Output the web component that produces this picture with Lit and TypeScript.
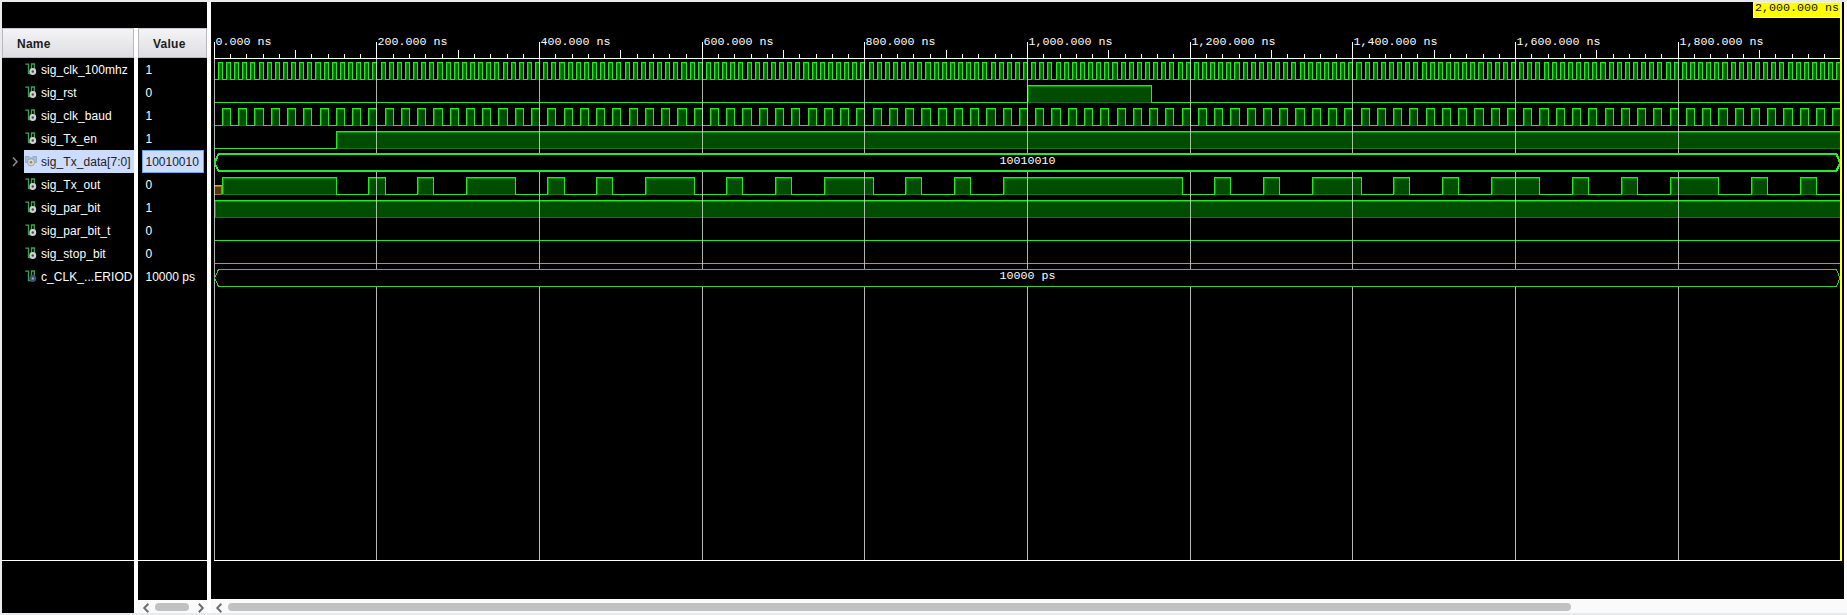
import { LitElement, html, svg, css } from "lit";
import { customElement } from "lit/decorators.js";

type Kind = "bit" | "bus";
interface Signal {
  name: string;
  value: string;
  kind: Kind;
  icon: "sig" | "bus" | "const";
  selected?: boolean;
  start?: number;
  edges?: number[];
  unknownUntil?: number;
}

const END = 2000;
const ORIGIN = 3;
const SCALE = 0.8133;
const px = (t: number) => Math.floor(ORIGIN + t * SCALE + 0.3);

const clock = (half: number): number[] => {
  const out: number[] = [];
  for (let t = half; t < END; t += half) out.push(t);
  return out;
};

const TX_OUT = [
  150, 190, 210, 250, 270, 310, 370, 410, 430, 470, 490, 530, 590, 630, 650, 690, 710, 750, 810, 850, 870, 910, 930,
  970, 1190, 1230, 1250, 1290, 1310, 1350, 1410, 1450, 1470, 1510, 1530, 1570, 1630, 1670, 1690, 1730, 1750, 1790,
  1850, 1890, 1910, 1950, 1970,
];

const SIGNALS: Signal[] = [
  { name: "sig_clk_100mhz", value: "1", kind: "bit", icon: "sig", start: 0, edges: clock(5) },
  { name: "sig_rst", value: "0", kind: "bit", icon: "sig", start: 0, edges: [1000, 1152] },
  { name: "sig_clk_baud", value: "1", kind: "bit", icon: "sig", start: 0, edges: clock(10) },
  { name: "sig_Tx_en", value: "1", kind: "bit", icon: "sig", start: 0, edges: [150] },
  { name: "sig_Tx_data[7:0]", value: "10010010", kind: "bus", icon: "bus", selected: true },
  { name: "sig_Tx_out", value: "0", kind: "bit", icon: "sig", start: 1, edges: TX_OUT, unknownUntil: 10 },
  { name: "sig_par_bit", value: "1", kind: "bit", icon: "sig", start: 1, edges: [] },
  { name: "sig_par_bit_t", value: "0", kind: "bit", icon: "sig", start: 0, edges: [] },
  { name: "sig_stop_bit", value: "0", kind: "bit", icon: "sig", start: 0, edges: [] },
  { name: "c_CLK_...ERIOD", value: "10000 ps", kind: "bus", icon: "const" },
];

const GRID = [0, 200, 400, 600, 800, 1000, 1200, 1400, 1600, 1800];

@customElement("signal-icon")
export class SignalIcon extends LitElement {
  static properties = { kind: {} };
  declare kind: string;
  static styles = css`
    :host { display: block; width: 12px; height: 13px; }
    svg { display: block; overflow: visible; }
  `;
  render() {
    if (this.kind === "bus")
      return html`<svg width="12" height="13" viewBox="0 0 12 13">
        <path d="M0.5 1.5H4L6 3.5L8 1.5H11.5V7.5H0.5Z" fill="#9fc0d8" stroke="#8aa4b4" stroke-width=".8" />
        <circle cx="6" cy="7.3" r="3.6" fill="#d6d8d8" stroke="#94989a" stroke-width=".8" />
        <circle cx="6" cy="7.3" r="1.3" fill="#9a8660" />
      </svg>`;
    const constant = this.kind === "const";
    return html`<svg width="12" height="13" viewBox="0 0 12 13">
      <path d="M0.3 1.2H3.5V10.5H6.5V1H9.3V7" fill="none" stroke="#3ca356" stroke-width="1.3" />
      <circle cx="7.8" cy="8.5" r="3.4" fill=${constant ? "#39506e" : "#d0d0d0"} />
      <circle cx="7.8" cy="8.5" r="1.2" fill=${constant ? "#8ba0bd" : "#4a4a4a"} />
    </svg>`;
  }
}

@customElement("wave-ruler")
export class WaveRuler extends LitElement {
  static styles = css`
    :host { display: block; height: 57px; }
    svg { display: block; }
    text { font: 11.67px "Liberation Mono", monospace; fill: #fff; }
  `;
  render() {
    const ticks = [];
    for (let t = 0; t < END; t += 20) {
      const h = t % 200 === 0 ? 16 : 4;
      ticks.push(svg`<rect x=${px(t)} y=${56 - h} width="1" height=${h} fill="#fff"/>`);
    }
    for (let t = 100; t < END; t += 200) {
      ticks.push(svg`<rect x=${px(t)} y="48" width="1" height="8" fill="#fff"/>`);
    }
    return html`<svg width="1633" height="57" shape-rendering="crispEdges">
      <rect x="3" y="56" width="1627" height="1" fill="#fff" />
      ${ticks}
      ${GRID.map(
        (t) => svg`<text x=${px(t) + 1.5} y="43" textLength=${(t >= 1000 ? 12 : t ? 10 : 8) * 7}>${
          t.toLocaleString("en-US")
        }.000 ns</text>`,
      )}
    </svg>`;
  }
}

@customElement("wave-row")
export class WaveRow extends LitElement {
  static properties = { signal: { attribute: false } };
  declare signal: Signal;
  static styles = css`
    :host { display: block; height: 23px; }
    svg { display: block; }
    text { font: 11.67px "Liberation Mono", monospace; fill: #fff; }
  `;
  private bit(s: Signal) {
    const t0 = s.unknownUntil ?? 0;
    const points = [t0, ...(s.edges ?? []), END];
    const narrow = (s.edges?.length ?? 0) > 300;
    let level = s.start ?? 0;
    let line = "";
    const fills = [];
    for (let i = 0; i < points.length - 1; i++) {
      const a = px(points[i]);
      const b = px(points[i + 1]);
      const y = level ? 3.5 : 20.5;
      line += `${i ? "L" : "M"}${a + 0.5} ${y}L${b + 0.5} ${y}`;
      if (level) {
        fills.push(svg`<rect x=${a} y="3" width=${b - a + 1} height="18" fill=${narrow ? "#006400" : "#004c00"}/>
          <rect x=${a} y="4" width=${b - a + 1} height="1" fill="#00a000"/>
          <rect x=${a + 1} y="4" width="1" height="16" fill="#00a000"/>
          <rect x=${a} y="20" width=${b - a + 1} height="1" fill="#1b701b"/>`);
      }
      level = level ? 0 : 1;
    }
    return svg`${fills}
      ${s.unknownUntil
        ? svg`<rect x="3.5" y="12.5" width="7" height="8" fill="#5a3500" stroke="#a87426"/><path d="M3 11.5H11" stroke="#e09c3c"/><path d="M11.5 20V3" stroke="#2ae42a"/>`
        : null}
      <path d=${line} fill="none" stroke="#2ae42a"/>`;
  }
  private bus(s: Signal) {
    const w = s.selected ? 2 : 1;
    const top = s.selected ? 3 : 3.5;
    const bottom = s.selected ? 20 : 20.5;
    const mid = 12;
    return svg`<path d=${`M3.5 ${mid}L7.5 ${top}H1625.5L1629 ${mid}L1625.5 ${bottom}H7.5Z`}
        fill="#000" stroke=${s.selected ? "#2ee62e" : "#3ccc3c"} stroke-width=${w}/>
      <text x="788.5" y="12.5" textLength="56">${s.value}</text>`;
  }
  render() {
    const s = this.signal;
    const isBus = s.kind === "bus";
    const grid = GRID.map((t) => svg`<rect x=${px(t)} y="0" width="1" height="23" fill="#d0dcd0" opacity=".82"/>`);
    return html`<svg width="1633" height="23" shape-rendering="crispEdges">
      ${isBus ? [grid, this.bus(s)] : [this.bit(s), grid]}
    </svg>`;
  }
}

@customElement("scroll-strip")
export class ScrollStrip extends LitElement {
  static properties = { thumb: { type: Number }, both: { type: Boolean } };
  declare thumb: number;
  declare both: boolean;
  static styles = css`
    :host { display: flex; flex: none; align-items: center; height: 13px; box-sizing: border-box; padding: 1px 3px 0 5px; gap: 6px; background: #fafafa; }
    .arrow { display: block; flex: none; width: 6px; height: 9px; overflow: visible; }
    .arrow path { fill: none; stroke: #6f6f6f; stroke-width: 2; }
    .thumb { height: 8px; border-radius: 4px; background: #c1c1c1; flex: none; }
    .end { margin-left: 3px; }
  `;
  render() {
    return html`<svg class="arrow" viewBox="0 0 6 9"><path d="M5.3 .8L1.3 5L5.3 9.2" /></svg>
      <div class="thumb" style="width:${this.thumb}px"></div>
      ${this.both ? html`<svg class="arrow end" viewBox="0 0 6 9"><path d="M.8 .8L4.8 5L.8 9.2" /></svg>` : null}`;
  }
}

@customElement("app-root")
export class AppRoot extends LitElement {
  static styles = css`
    :host { display: block; width: 1847px; height: 615px; box-sizing: border-box; padding: 2px 0 0 2px; overflow: hidden; background: #e9eaeb; font: 12px "Liberation Sans", Arial, sans-serif; color: #fff; }
    .frame { display: flex; height: 611px; background: #fff; }
    .side { display: grid; grid-template: 26px 560px 25px / 132px 4px 69px; width: 205px; flex: none; }
    .top { grid-column: 1 / 4; background: #000; }
    .col { background: #000; display: flex; flex-direction: column; }
    .values { grid-column: 3; }
    .head { height: 30px; box-sizing: border-box; border: 1px solid #b9b9bd; border-top-color: #c8c8cc; background: linear-gradient(#f4f4f6, #dedee2); color: #1c1c1c; font-weight: bold; letter-spacing: .25px; line-height: 31px; padding-left: 14px; }
    .row { height: 23px; display: flex; align-items: center; white-space: pre; line-height: 21px; }
    .name { padding-left: 4px; }
    .twist { width: 18px; height: 23px; flex: none; }
    .twist path { fill: none; stroke: #8c8c8c; stroke-width: 1.5; }
    .cell { display: flex; align-items: center; flex: 1; height: 23px; gap: 4px; padding-left: 1px; }
    .label { display: block; letter-spacing: .06px; padding-top: 2px; }
    .selected .cell { background: #cbdcff; color: #222; }
    .value { padding-left: 4px; }
    .text { padding: 2px 3.5px 0; flex: none; }
    .value.selected .text { box-sizing: border-box; width: 62px; height: 23px; line-height: 23px; padding: 0 2.5px; border: 1px solid #72a4e0; background: #cbdcff; color: #222; }
    .rule { margin-top: auto; height: 1px; background: #fff; margin-bottom: 27px; flex: none; }
    .foot { background: #000; }
    .vfoot { grid-column: 3; display: flex; flex-direction: column; }
    .vpad { height: 12px; background: #000; }
    .wave { margin-left: 4px; width: 1633px; flex: none; display: flex; flex-direction: column; background: #000; }
    .canvas { position: relative; width: 1633px; height: 597px; }
    .lane { display: flex; flex-direction: column; }
    .rest { display: block; }
    .marker { position: absolute; left: 1629px; top: 0; width: 2px; height: 559px; background: #ff3; }
    .badge { position: absolute; left: 1542px; top: 0; box-sizing: border-box; width: 88px; height: 16px; border: 1px solid #ffffa0; background: #ff0; color: #111; font: 11.67px/10px "Liberation Mono", monospace; padding-left: 1px; white-space: pre; }
    .wavebox { display: flex; flex-direction: column; flex: 1; }
    .wavescroll { margin: 1px 0 0 4px; }
  `;
  render() {
    return html`<div class="frame">
      <div class="side">
        <div class="top"></div>
        <div class="col">
          <div class="head">Name</div>
          ${SIGNALS.map(
            (s) => html`<div class="row name ${s.selected ? "selected" : ""}">
              <svg class="twist">${s.selected ? svg`<path d="M7 7.5L11 11.8L7 16"/>` : null}</svg>
              <div class="cell"><signal-icon .kind=${s.icon}></signal-icon><span class="label">${s.name}</span></div>
            </div>`,
          )}
          <div class="rule"></div>
        </div>
        <div class="col values">
          <div class="head">Value</div>
          ${SIGNALS.map(
            (s) => html`<div class="row value ${s.selected ? "selected" : ""}"><span class="text">${s.value}</span></div>`,
          )}
          <div class="rule"></div>
        </div>
        <div class="foot"></div>
        <div class="vfoot"><div class="vpad"></div><scroll-strip .thumb=${34} .both=${true}></scroll-strip></div>
      </div>
      <div class="wavebox">
        <div class="wave">
          <div class="canvas">
            <wave-ruler></wave-ruler>
            <div class="lane">${SIGNALS.map((s) => html`<wave-row .signal=${s}></wave-row>`)}</div>
            <svg class="rest" width="1633" height="272" shape-rendering="crispEdges">
              ${GRID.map((t) => svg`<rect x=${px(t)} y="0" width="1" height="271" fill="#b9b9b9"/>`)}
              <rect x="3" y="271" width="1627" height="1" fill="#fff" />
            </svg>
            <div class="marker"></div>
            <div class="badge">2,000.000 ns</div>
          </div>
        </div>
        <scroll-strip class="wavescroll" .thumb=${1343}></scroll-strip>
      </div>
    </div>`;
  }
}
